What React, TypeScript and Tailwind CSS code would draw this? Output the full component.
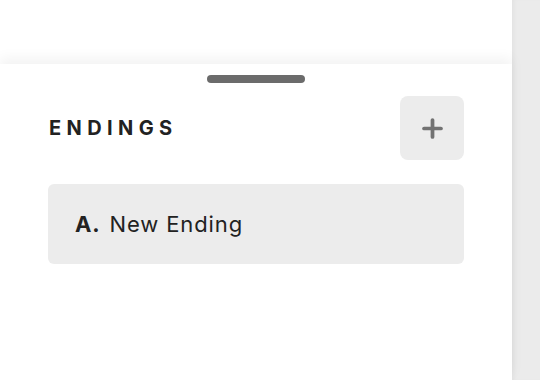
import { Plus } from 'lucide-react'

export default function App() {
  return (
    <div className="flex h-[380px] w-[540px] overflow-hidden bg-white font-['Inter',sans-serif]">
      {/* Main column */}
      <div className="relative z-10 flex w-[512px] flex-col">
        <div className="h-16 shrink-0 bg-white" />

        {/* Bottom sheet */}
        <div className="flex flex-1 flex-col bg-white px-12 shadow-[0_-6px_12px_rgba(0,0,0,0.05)]">
          <div className="flex justify-center pt-[11px]">
            <div className="h-2 w-[98px] rounded-full bg-[#6b6b6b]" />
          </div>

          <div className="mt-[13px] flex items-center justify-between">
            <h2 className="pl-[1px] text-[20px] font-bold tracking-[0.27em] text-[#222]">ENDINGS</h2>
            <button className="flex h-16 w-16 items-center justify-center rounded-lg bg-[#ececec] text-[#727272]">
              <Plus size={29} strokeWidth={3.1} />
            </button>
          </div>

          <div className="mt-6 flex h-20 items-center rounded-md bg-[#ececec] px-[27px] text-[22px] tracking-[0.04em] text-[#222]">
            <span className="font-bold">A.</span>
            <span className="ml-[9px]">New Ending</span>
          </div>
        </div>
      </div>

      {/* Right strip */}
      <div className="flex-1 bg-[#ebebeb] shadow-[inset_4px_0_4px_-2px_rgba(0,0,0,0.04)]" />
    </div>
  )
}
